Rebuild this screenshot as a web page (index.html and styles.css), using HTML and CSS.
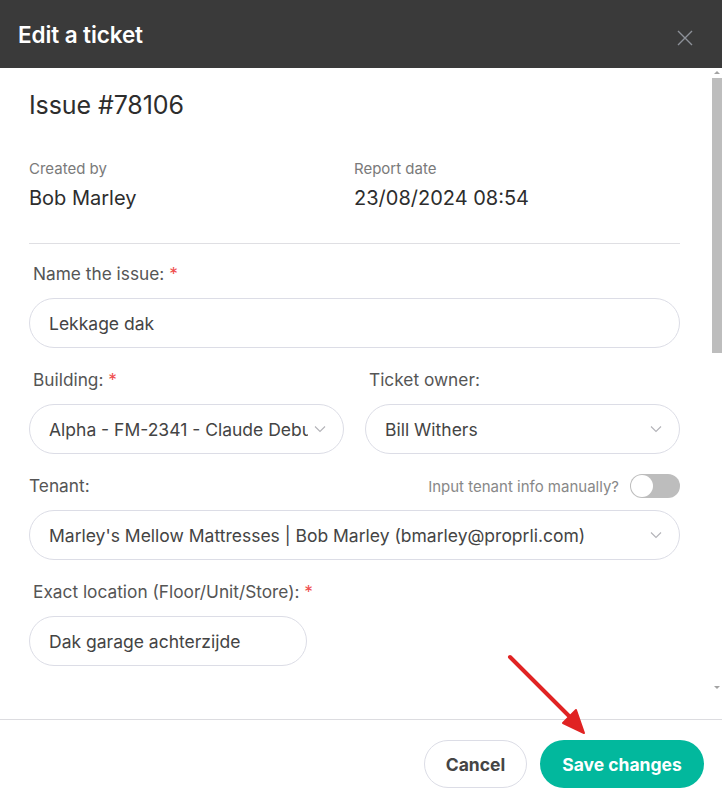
FILE: index.html
```html
<!DOCTYPE html>
<html>
<head>
<meta charset="utf-8">
<link rel="stylesheet" href="styles.css">
</head>
<body>
<div class="modal">
  <header class="modal-header">
    <h1 class="modal-title">Edit a ticket</h1>
    <button class="close-btn" aria-label="Close">
      <svg width="16" height="16" viewBox="0 0 16 16"><path d="M1 1L15 15M15 1L1 15" stroke="#8d9199" stroke-width="1.4" fill="none"/></svg>
    </button>
  </header>
  <div class="modal-body">
    <div class="scroll-area">
      <div class="content">
        <h2 class="issue-title">Issue #78106</h2>
        <div class="meta">
          <div class="meta-item">
            <div class="meta-label">Created by</div>
            <div class="meta-value">Bob Marley</div>
          </div>
          <div class="meta-item">
            <div class="meta-label">Report date</div>
            <div class="meta-value">23/08/2024 08:54</div>
          </div>
        </div>
        <hr class="divider">
        <div class="field first">
          <label class="label">Name the issue: <span class="req">*</span></label>
          <div class="input">Lekkage dak</div>
        </div>
        <div class="row">
          <div class="field">
            <label class="label">Building: <span class="req">*</span></label>
            <div class="input select"><span class="val">Alpha - FM-2341 - Claude Debussylaan</span><svg class="chev" width="12" height="8" viewBox="0 0 12 8"><path d="M1 1.5L6 6.5L11 1.5" stroke="#b3b3b8" stroke-width="1.1" fill="none"/></svg></div>
          </div>
          <div class="field">
            <label class="label">Ticket owner:</label>
            <div class="input select"><span class="val">Bill Withers</span><svg class="chev" width="12" height="8" viewBox="0 0 12 8"><path d="M1 1.5L6 6.5L11 1.5" stroke="#b3b3b8" stroke-width="1.1" fill="none"/></svg></div>
          </div>
        </div>
        <div class="field">
          <div class="label-row">
            <label class="label flush">Tenant:</label>
            <div class="manual">
              <span>Input tenant info manually?</span>
              <span class="toggle"><span class="knob"></span></span>
            </div>
          </div>
          <div class="input select"><span class="val">Marley's Mellow Mattresses | Bob Marley (bmarley@proprli.com)</span><svg class="chev" width="12" height="8" viewBox="0 0 12 8"><path d="M1 1.5L6 6.5L11 1.5" stroke="#b3b3b8" stroke-width="1.1" fill="none"/></svg></div>
        </div>
        <div class="field">
          <label class="label">Exact location (Floor/Unit/Store): <span class="req">*</span></label>
          <div class="input short">Dak garage achterzijde</div>
        </div>
        <div class="spacer"></div>
      </div>
    </div>
    <div class="fake-scrollbar">
      <span class="sb-arrow up"></span>
      <span class="sb-thumb"></span>
      <span class="sb-arrow down"></span>
    </div>
  </div>
  <footer class="modal-footer">
    <button class="btn btn-cancel">Cancel</button>
    <button class="btn btn-save">Save changes</button>
  </footer>
  <svg class="annot" width="722" height="806" viewBox="0 0 722 806">
    <path d="M510 657L571 718" stroke="#e02323" stroke-width="4" stroke-linecap="round"/>
    <path d="M584 733L563 723L576 710Z" fill="#e02323" stroke="#e02323" stroke-width="2" stroke-linejoin="round"/>
  </svg>
</div>
</body>
</html>
```

FILE: styles.css
```css
* { box-sizing: border-box; }
html, body { margin: 0; padding: 0; background: #fff; }
body { width: 722px; height: 806px; overflow: hidden; font-family: Inter, "Noto Sans", sans-serif; }

.modal { position: relative; width: 722px; height: 806px; display: flex; flex-direction: column; background: #fff; }

.modal-header {
  height: 68px; flex: none; background: #3a3a3a;
  display: flex; align-items: center; justify-content: space-between;
  padding: 0 29px 0 18px;
}
.modal-title {
  margin: 0; color: #fff; font-family: Inter, sans-serif; font-weight: 600;
  font-size: 22.5px; letter-spacing: -0.1px;
}
.close-btn { background: none; border: 0; padding: 0; margin-top: 8px; width: 16px; height: 16px; display: block; }
.close-btn svg { display: block; }

.modal-body { flex: 1; position: relative; min-height: 0; display: flex; }
.scroll-area { flex: 1; overflow: hidden; }

.fake-scrollbar {
  width: 10px; flex: none; background: #fff;
  display: flex; flex-direction: column; align-items: center;
  padding-top: 3px; padding-bottom: 30px;
}
.sb-arrow { width: 0; height: 0; border-left: 3px solid transparent; border-right: 3px solid transparent; display: block; }
.sb-arrow.up { border-bottom: 3px solid #a3a3a3; }
.sb-arrow.down { border-top: 3px solid #a3a3a3; margin-top: auto; }
.sb-thumb { display: block; width: 10px; height: 275px; background: #bdbdbd; margin-top: 4px; }

.content { padding: 22px 32px 0 29px; }

.issue-title { margin: 0; font-weight: 400; font-size: 25px; color: #2d2d2d; line-height: 30px; letter-spacing: -0.1px; }

.meta { display: flex; margin-top: 40px; }
.meta-item { width: 325px; }
.meta-label { font-size: 15px; color: #7a7a7a; line-height: 18px; }
.meta-value { font-size: 20px; color: #2d2d2d; line-height: 24px; margin-top: 8px; }

.divider { border: 0; border-top: 1px solid #dfdfe3; margin: 33px 0 0; }

.field { margin-top: 22px; display: flex; flex-direction: column; flex: 1; min-width: 0; }
.field.first { margin-top: 20px; }
.label { font-size: 17.3px; color: #555; line-height: 20px; padding-left: 4px; display: block; }
.label.flush { padding-left: 0; }
.req { color: #ef4e4e; }

.input {
  margin-top: 14px; height: 50px; border: 1px solid #dcdde6; border-radius: 25px;
  display: flex; align-items: center; padding: 0 19px;
  font-size: 17.5px; color: #444;
}
.select { justify-content: space-between; }
.select .val { white-space: nowrap; overflow: hidden; flex: 1; min-width: 0; }
.chev { flex: none; margin-left: 6px; margin-right: -2px; }
.short { width: 278px; }

.row { display: flex; gap: 21px; }

.label-row { display: flex; justify-content: space-between; align-items: center; height: 20px; }
.manual { display: flex; align-items: center; gap: 11px; font-size: 15px; color: #888; }
.toggle { width: 50px; height: 24px; background: #bdbdbd; border-radius: 12px; position: relative; display: block; }
.knob { position: absolute; left: 1px; top: 1px; width: 22px; height: 22px; border-radius: 50%; background: #fff; }

.spacer { height: 400px; }

.modal-footer {
  height: 87px; flex: none; border-top: 1px solid #dcdce0;
  display: flex; justify-content: flex-end; align-items: flex-start;
  padding: 20px 18px 0 0; gap: 13px;
}
.btn { height: 48px; border-radius: 24px; font-family: Inter, sans-serif; font-weight: 700; font-size: 17.5px; padding: 0; }
.btn-cancel { width: 103px; background: #fff; border: 1px solid #dcdde6; color: #454545; }
.btn-save { width: 164px; background: #02b89d; border: 0; color: #fff; }

.annot { position: absolute; left: 0; top: 0; pointer-events: none; }
```
